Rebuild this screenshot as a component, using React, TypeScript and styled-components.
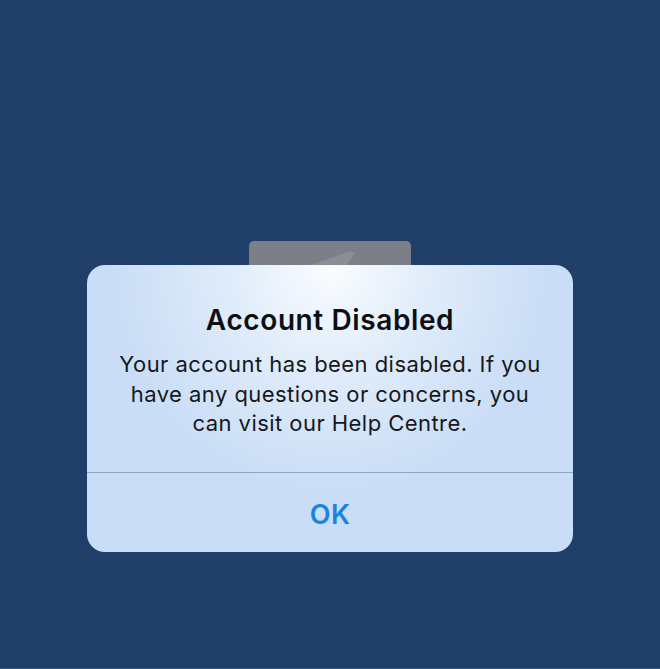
import React from "react";
import styled, { createGlobalStyle } from "styled-components";

const Global = createGlobalStyle`
  html, body { margin: 0; padding: 0; background: #1f3f69; }
  body { font-family: Inter, "Noto Sans", "Liberation Sans", sans-serif; }
`;

const Page = styled.div`
  height: 669px;
  box-sizing: border-box;
  padding-top: 241px;
  display: flex;
  flex-direction: column;
  align-items: center;
  background: #1f3f69;
  border-bottom: 1px solid #3b5a85;
`;

const Tab = styled.div`
  width: 162px;
  height: 24px;
  box-sizing: border-box;
  border-radius: 5px 5px 0 0;
  background: #7c7f87;
  display: flex;
  justify-content: center;
  overflow: hidden;
`;

const Dialog = styled.div`
  width: 486px;
  height: 287px;
  border-radius: 18px;
  background: radial-gradient(ellipse 220px 230px at 50% 0%, #fbfdff 0%, #e0ecfa 45%, #c9ddf6 100%);
  display: flex;
  flex-direction: column;
  overflow: hidden;
`;

const Message = styled.div`
  height: 208px;
  box-sizing: border-box;
  padding-top: 37px;
  display: flex;
  flex-direction: column;
  align-items: center;
  border-bottom: 1px solid #8ca6c3;
`;

const Title = styled.h1`
  margin: 0;
  font-size: 28px;
  font-weight: 600;
  color: #0d0f12;
  letter-spacing: 0.6px;
  line-height: 36px;
`;

const Body = styled.p`
  margin: 12px 0 0;
  font-size: 22px;
  font-weight: 400;
  color: #16181b;
  line-height: 29.5px;
  letter-spacing: 0.45px;
  text-align: center;
  width: 440px;
`;

const Button = styled.button`
  flex: 1;
  border: none;
  background: transparent;
  font-family: inherit;
  font-size: 27px;
  font-weight: 600;
  letter-spacing: 0.5px;
  color: #1a84e2;
  padding: 4px 0 0;
  cursor: pointer;
`;

export default function App() {
  return (
    <>
      <Global />
      <Page>
        <Tab>
          <svg width="162" height="24" viewBox="0 0 162 24">
            <polygon points="62,24 102,10 106,12 98,24" fill="#8b8e95" />
          </svg>
        </Tab>
        <Dialog role="alertdialog">
          <Message>
            <Title>Account Disabled</Title>
            <Body>
              Your account has been disabled. If you have any questions or concerns, you can visit our Help Centre.
            </Body>
          </Message>
          <Button>OK</Button>
        </Dialog>
      </Page>
    </>
  );
}
